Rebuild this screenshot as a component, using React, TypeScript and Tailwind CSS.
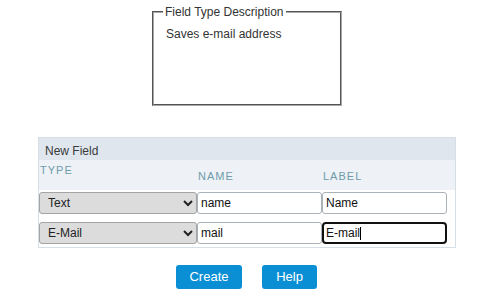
import React from "react";

const rows = [
  { type: "Text", name: "name", label: "Name", focused: false },
  { type: "E-Mail", name: "mail", label: "E-mail", focused: true },
];

const types = ["Text", "E-Mail", "Number", "Date", "Checkbox"];

export default function App() {
  return (
    <div className="w-[492px] h-[304px] bg-white font-['Liberation_Sans',Arial,sans-serif] text-[12px] text-[#222] overflow-hidden">
      <fieldset className="ml-[152px] mt-[5px] w-[190px] h-[101px] border-2 [border-style:groove] border-[#a8a8a8] pl-[9px] pr-[9px] pt-[8px]">
        <legend className="px-[2px] leading-[14px] text-[#333]">Field Type Description</legend>
        <p className="pl-[3px] leading-[14px] text-[#333]">Saves e-mail address</p>
      </fieldset>

      <div className="ml-[38px] mt-[31px] w-[418px] border border-[#d6dee6]">
        <div className="h-[22px] bg-[#dfe6ee] pl-[6px] pt-[6px] leading-[14px] text-[#3a3a3a]">New Field</div>
        <div className="h-[30px] bg-[#eef2f6] flex text-[11px] tracking-[1px] text-[#6f9bab] leading-[13px]">
          <div className="w-[158px] pl-[1px] pt-[4px]">TYPE</div>
          <div className="w-[125px] pl-[1px] pt-[10px]">NAME</div>
          <div className="w-[125px] pl-[1px] pt-[10px]">LABEL</div>
        </div>
        <div className="flex flex-col gap-[8px] pt-[2px] pb-[3px]">
          {rows.map((r) => (
            <div key={r.name} className="flex h-[22px]">
              <select
                defaultValue={r.type}
                className="w-[158px] h-[22px] bg-[#dcdcdc] border border-[#a4a4a4] rounded-[3px] pl-[4px] text-[12px] text-[#222]"
              >
                {types.map((t) => (
                  <option key={t}>{t}</option>
                ))}
              </select>
              <input
                defaultValue={r.name}
                className="w-[125px] h-[22px] bg-white border border-[#a9b1b9] rounded-[3px] px-[3px] text-[12px] text-[#111] outline-none"
              />
              {r.focused ? (
                <div className="relative w-[125px] h-[22px]">
                  <input
                    defaultValue={r.label}
                    className="w-full h-full bg-white border-2 border-[#111] rounded-[4px] px-[2px] text-[12px] text-[#111] outline-none"
                  />
                  <span className="absolute left-[38px] top-[5px] w-[1px] h-[13px] bg-black" />
                </div>
              ) : (
                <input
                  defaultValue={r.label}
                  className="w-[125px] h-[22px] bg-white border border-[#a9b1b9] rounded-[3px] px-[3px] text-[12px] text-[#111] outline-none"
                />
              )}
            </div>
          ))}
        </div>
      </div>

      <div className="flex justify-center gap-[20px] mt-[17px] pl-[1px]">
        <button className="w-[66px] h-[24px] bg-[#0a8fd5] rounded-[3px] text-white text-[13px]">Create</button>
        <button className="w-[55px] h-[24px] bg-[#0a8fd5] rounded-[3px] text-white text-[13px]">Help</button>
      </div>
    </div>
  );
}
